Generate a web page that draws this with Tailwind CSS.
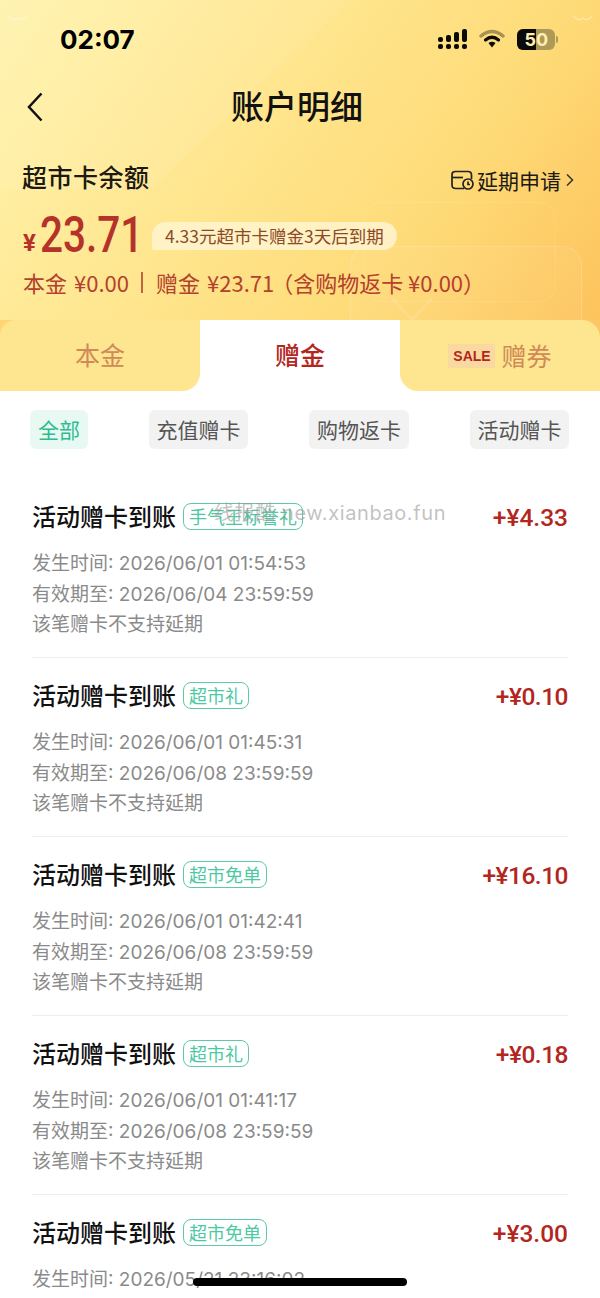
<!DOCTYPE html>
<html lang="zh-CN">
<head>
    <meta charset="UTF-8">
    <meta name="viewport" content="width=device-width, initial-scale=1.0">
    <title>账户明细</title>
    <script src="https://cdn.jsdelivr.net/npm/@tailwindcss/browser@4"></script>
</head>
<body class="bg-white font-['Noto_Sans_CJK_SC','Noto_Sans',sans-serif]">
<div class="relative w-[600px] h-[1298px] overflow-hidden bg-white">

    <!-- header -->
    <div class="relative h-[320px] overflow-hidden bg-[linear-gradient(125deg,#fff3ad_0%,#ffe68f_40%,#fedb78_70%,#fdc35c_100%)]">
        <svg class="absolute left-0 top-0" width="600" height="320" viewBox="0 0 600 320" fill="none">
            <path d="M350 0 L150 190 L0 190 L0 0Z" fill="#fff" fill-opacity="0.07"/>
            <path d="M392 298 L412 320 L432 298" stroke="#fff" stroke-opacity="0.15" stroke-width="2"/>
            <path d="M8 16 Q14 22 18 18 Q22 22 27 16" stroke="#fff" stroke-opacity="0.35" stroke-width="1.500"/>
            <path d="M573 16 Q579 22 583 18 Q587 22 592 16" stroke="#fff" stroke-opacity="0.35" stroke-width="1.500"/>
        </svg>
        <div class="absolute left-[350px] top-[246px] w-[232px] h-[120px] rounded-[20px] border border-white/15 bg-white/5"></div>
        <div class="absolute left-[364px] top-[202px] w-[192px] h-[100px] rounded-[16px] border border-white/10"></div>

        <!-- status bar -->
        <div class="relative flex items-center justify-between h-[78px] pl-[60px] pr-[42px]">
            <span class="text-[26px] font-bold text-black font-['Inter',sans-serif]">02:07</span>
            <div class="flex items-center gap-[11px]">
                <svg width="30" height="21" viewBox="0 0 30 21" fill="#0a0a0a">
                    <rect x="0" y="8" width="5" height="5" rx="2"/><rect x="0" y="15" width="5" height="5" rx="2"/>
                    <rect x="8" y="6" width="5" height="7" rx="2"/><rect x="8" y="15" width="5" height="5" rx="2"/>
                    <rect x="16" y="3" width="5" height="10" rx="2"/><rect x="16" y="15" width="5" height="5" rx="2"/>
                    <rect x="24" y="0" width="5" height="13" rx="2"/><rect x="24" y="15" width="5" height="5" rx="2"/>
                </svg>
                <svg width="26" height="20" viewBox="0 0 26 20" fill="none">
                    <path d="M2 7 Q13 -2 24 7" stroke="#a89250" stroke-width="3.500" stroke-linecap="round"/>
                    <path d="M6.500 11 Q13 5.500 19.500 11" stroke="#0a0a0a" stroke-width="3.200" stroke-linecap="round"/>
                    <path d="M9.500 14 L13 18.500 L16.500 14 Q13 11.500 9.500 14Z" fill="#0a0a0a"/>
                </svg>
                <div class="flex items-center">
                    <div class="flex w-[38px] h-[21px] rounded-[6px] overflow-hidden bg-[#ad9a58] ml-[1px] text-[18px] leading-[21px] font-bold font-['Inter',sans-serif]">
                        <span class="w-[19px] bg-[#0a0a0a] text-[#ffeeb0] text-right">5</span>
                        <span class="w-[19px] text-[#ffeeb0] text-left">0</span>
                    </div>
                    <div class="ml-[1px] w-[2px] h-[7px] rounded-r-full bg-[#ad9a58]"></div>
                </div>
            </div>
        </div>

        <!-- nav -->
        <div class="relative flex items-center justify-center h-[58px] -mt-[2px] pr-[6px]">
            <svg class="absolute left-[26px] top-[16px]" width="18" height="30" viewBox="0 0 18 30" fill="none">
                <path d="M15.500 1.500 L3 15 L15.500 28.500" stroke="#111" stroke-width="2.500"/>
            </svg>
            <h1 class="text-[33px] font-medium text-[#111] leading-none">账户明细</h1>
        </div>

        <!-- balance -->
        <div class="relative flex items-center justify-between mt-[23px] pl-[22px] pr-[26px]">
            <span class="text-[25px] font-medium text-[#1c1a12] leading-[36px] tracking-[0.5px]">超市卡余额</span>
            <div class="flex items-center mt-[8px]">
                <svg width="24" height="20" viewBox="0 0 24 20" fill="none" stroke="#222" stroke-width="1.700">
                    <path d="M13 18.500 H5 Q1 18.500 1 15 V4.500 Q1 1.500 4.500 1.500 H17 Q20.500 1.500 20.500 5 V9"/>
                    <path d="M1 7.500 H12"/>
                    <circle cx="17" cy="14" r="5"/>
                    <path d="M17 11.500 V14.500 H19"/>
                </svg>
                <span class="ml-[2px] text-[21px] text-[#1c1a12] leading-[30px]">延期申请</span>
                <svg class="ml-[5px]" width="8" height="14" viewBox="0 0 8 14" fill="none"><path d="M1 1.500 L6.500 7 L1 12.500" stroke="#333" stroke-width="1.500"/></svg>
            </div>
        </div>

        <div class="relative flex items-end pl-[23px] mt-[12px] h-[56px] text-[#b4322a]">
            <span class="w-[17px] text-[24px] font-bold leading-none mb-[8px] font-['Roboto',sans-serif]">¥</span>
            <span class="w-[102px] origin-left scale-x-[0.81] text-[50px] font-medium leading-[56px] font-['Roboto',sans-serif]">23.71</span>
            <span class="ml-[10px] mb-[13px] px-[13px] h-[28px] rounded-[14px] rounded-bl-[2px] bg-[#fff5d0]/85 text-[17.500px] leading-[28px] text-[#8b4a28] whitespace-nowrap">4.33元超市卡赠金3天后到期</span>
        </div>

        <div class="relative flex items-center pl-[23px] mt-[4px] text-[22px] leading-[30px] text-[#b4402e] whitespace-nowrap">
            <span>本金</span>
            <span class="ml-[7px]">¥0.00</span>
            <span class="ml-[12px] w-[2px] h-[21px] bg-[#b4402e]/80"></span>
            <span class="ml-[13px]">赠金</span>
            <span class="ml-[7px]">¥23.71</span>
            <span class="-ml-[3px]">（含购物返卡 ¥0.00）</span>
        </div>
    </div>

    <!-- tabs -->
    <div class="grid grid-cols-3 h-[71px] text-[25px] leading-[69px] text-center">
        <div class="bg-[linear-gradient(#fed675_50%,#fff_50%)]">
            <div class="h-full rounded-tl-[16px] rounded-br-[18px] bg-[#fee58f] text-[#cf8a58]">本金</div>
        </div>
        <div class="bg-white font-medium text-[#b3261e]">赠金</div>
        <div class="bg-[linear-gradient(#fdc765_50%,#fff_50%)]">
            <div class="flex items-center justify-center h-full rounded-tr-[18px] rounded-bl-[18px] bg-[#fee58f] text-[#cf8a58]">
                <span class="w-[47px] h-[24px] mr-[6px] bg-[#fad9a0] text-[14px] leading-[24px] font-bold text-[#b3261e] font-['Liberation_Sans',sans-serif]">SALE</span>
                赠券
            </div>
        </div>
    </div>

    <!-- filters -->
    <div class="flex justify-between pl-[30px] pr-[31px] mt-[19px] text-[21px] leading-[38px] text-[#555]">
        <span class="px-[8px] pb-[1px] rounded-[6px] bg-[#e8f9f3] text-[#2fbb8e]">全部</span>
        <span class="w-[99px] pb-[1px] text-center rounded-[6px] bg-[#f2f2f2]">充值赠卡</span>
        <span class="w-[100px] pb-[1px] text-center rounded-[6px] bg-[#f2f2f2]">购物返卡</span>
        <span class="w-[99px] pb-[1px] text-center rounded-[6px] bg-[#f2f2f2]">活动赠卡</span>
    </div>

    <!-- list -->
    <div class="mt-[30px] mx-[32px]">
        <div class="h-[179px] pt-[21px] border-b border-[#eeeeee]">
            <div class="flex items-center justify-between h-[34px]">
                <div class="flex items-center">
                    <span class="-mt-[2px] text-[24px] font-medium text-[#111] leading-[34px]">活动赠卡到账</span>
                    <span class="ml-[7px] -mt-[2px] h-[27px] px-[5px] rounded-[8px] border border-[#5ec9a6] text-[18px] leading-[25px] text-[#4cc9a3]">手气王标誉礼</span>
                </div>
                <span class="mt-[2px] text-[24.500px] font-medium text-[#b3261e] font-['Roboto',sans-serif]">+¥4.33</span>
            </div>
            <div class="mt-[15px] text-[19px] leading-[30.500px] text-[#8a8a8a] font-['Inter','Noto_Sans_CJK_SC',sans-serif]">
                <p>发生时间: 2026/06/01 01:54:53</p>
                <p>有效期至: 2026/06/04 23:59:59</p>
                <p>该笔赠卡不支持延期</p>
            </div>
        </div>
        <div class="h-[179px] pt-[21px] border-b border-[#eeeeee]">
            <div class="flex items-center justify-between h-[34px]">
                <div class="flex items-center">
                    <span class="-mt-[2px] text-[24px] font-medium text-[#111] leading-[34px]">活动赠卡到账</span>
                    <span class="ml-[7px] -mt-[2px] h-[27px] px-[5px] rounded-[8px] border border-[#5ec9a6] text-[18px] leading-[25px] text-[#4cc9a3]">超市礼</span>
                </div>
                <span class="mt-[2px] text-[24.500px] font-medium text-[#b3261e] font-['Roboto',sans-serif] tracking-[-0.500px]">+¥0.10</span>
            </div>
            <div class="mt-[15px] text-[19px] leading-[30.500px] text-[#8a8a8a] font-['Inter','Noto_Sans_CJK_SC',sans-serif]">
                <p>发生时间: 2026/06/01 01:45:31</p>
                <p>有效期至: 2026/06/08 23:59:59</p>
                <p>该笔赠卡不支持延期</p>
            </div>
        </div>
        <div class="h-[179px] pt-[21px] border-b border-[#eeeeee]">
            <div class="flex items-center justify-between h-[34px]">
                <div class="flex items-center">
                    <span class="-mt-[2px] text-[24px] font-medium text-[#111] leading-[34px]">活动赠卡到账</span>
                    <span class="ml-[7px] -mt-[2px] h-[27px] px-[5px] rounded-[8px] border border-[#5ec9a6] text-[18px] leading-[25px] text-[#4cc9a3]">超市免单</span>
                </div>
                <span class="mt-[2px] text-[24.500px] font-medium text-[#b3261e] font-['Roboto',sans-serif] tracking-[-0.500px]">+¥16.10</span>
            </div>
            <div class="mt-[15px] text-[19px] leading-[30.500px] text-[#8a8a8a] font-['Inter','Noto_Sans_CJK_SC',sans-serif]">
                <p>发生时间: 2026/06/01 01:42:41</p>
                <p>有效期至: 2026/06/08 23:59:59</p>
                <p>该笔赠卡不支持延期</p>
            </div>
        </div>
        <div class="h-[179px] pt-[21px] border-b border-[#eeeeee]">
            <div class="flex items-center justify-between h-[34px]">
                <div class="flex items-center">
                    <span class="-mt-[2px] text-[24px] font-medium text-[#111] leading-[34px]">活动赠卡到账</span>
                    <span class="ml-[7px] -mt-[2px] h-[27px] px-[5px] rounded-[8px] border border-[#5ec9a6] text-[18px] leading-[25px] text-[#4cc9a3]">超市礼</span>
                </div>
                <span class="mt-[2px] text-[24.500px] font-medium text-[#b3261e] font-['Roboto',sans-serif] tracking-[-0.500px]">+¥0.18</span>
            </div>
            <div class="mt-[15px] text-[19px] leading-[30.500px] text-[#8a8a8a] font-['Inter','Noto_Sans_CJK_SC',sans-serif]">
                <p>发生时间: 2026/06/01 01:41:17</p>
                <p>有效期至: 2026/06/08 23:59:59</p>
                <p>该笔赠卡不支持延期</p>
            </div>
        </div>
        <div class="h-[179px] pt-[21px]">
            <div class="flex items-center justify-between h-[34px]">
                <div class="flex items-center">
                    <span class="-mt-[2px] text-[24px] font-medium text-[#111] leading-[34px]">活动赠卡到账</span>
                    <span class="ml-[7px] -mt-[2px] h-[27px] px-[5px] rounded-[8px] border border-[#5ec9a6] text-[18px] leading-[25px] text-[#4cc9a3]">超市免单</span>
                </div>
                <span class="mt-[2px] text-[24.500px] font-medium text-[#b3261e] font-['Roboto',sans-serif]">+¥3.00</span>
            </div>
            <div class="mt-[15px] text-[19px] leading-[30.500px] text-[#8a8a8a] font-['Inter','Noto_Sans_CJK_SC',sans-serif]">
                <p>发生时间: 2026/05/21 23:16:02</p>
            </div>
        </div>
    </div>

    <!-- watermark -->
    <div class="absolute left-[214px] top-[498px] text-[20px] leading-[30px] tracking-[0.600px] text-[#999]/60 whitespace-pre font-['Inter','Noto_Sans_CJK_SC',sans-serif]">线报酷 new.xianbao.fun</div>

    <!-- home indicator -->
    <div class="absolute left-[193px] top-[1278px] w-[214px] h-[8px] rounded-full bg-black"></div>
</div>
</body>
</html>
